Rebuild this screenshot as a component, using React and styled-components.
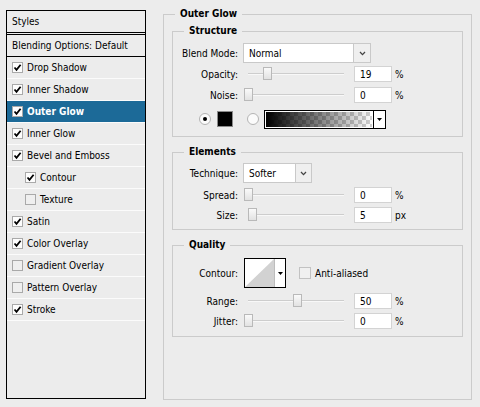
import React from "react";
import styled, { createGlobalStyle } from "styled-components";

const Global = createGlobalStyle`
  html, body { margin: 0; padding: 0; background: #ececec; }
  body {
    font-family: "DejaVu Sans Condensed", "Liberation Sans", sans-serif;
    font-size: 10px;
    color: #000;
  }
`;

const Page = styled.div`
  display: flex;
  align-items: flex-start;
  gap: 17px;
  padding: 8px 0 0 6px;
  width: 480px;
  height: 407px;
  box-sizing: border-box;
  overflow: hidden;
`;

const LeftPanel = styled.div`
  margin-top: 2px;
  width: 140px;
  height: 389px;
  border: 1px solid #000;
  box-sizing: border-box;
  display: flex;
  flex-direction: column;
`;

const HeaderRow = styled.div`
  height: 21px;
  flex: none;
  display: flex;
  align-items: center;
  padding-left: 5px;
  border-bottom: ${(p) => (p.$double ? "3px double #000" : "1px solid #000")};
`;

const EffectRow = styled.div`
  height: 21px;
  flex: none;
  display: flex;
  align-items: center;
  gap: 4px;
  padding-left: ${(p) => (p.$indent ? 18 : 5)}px;
  border-bottom: 1px solid #fbfbfb;
  background: ${(p) => (p.$selected ? "#1c6a98" : "transparent")};
  color: ${(p) => (p.$selected ? "#fff" : "#000")};
  font-weight: ${(p) => (p.$selected ? "bold" : "normal")};
`;

const Box = styled.span`
  width: 11px;
  height: 11px;
  box-sizing: border-box;
  flex: none;
  border: 1px solid #a9a9a9;
  background: ${(p) => (p.$checked ? "#fdfdfd" : "#efefef")};
  display: flex;
  align-items: center;
  justify-content: center;
`;

const Check = ({ checked }) => (
  <Box $checked={checked}>
    {checked && (
      <svg width="9" height="9" viewBox="0 0 9 9">
        <path d="M1.5 4.5 L3.5 6.8 L7.6 1.8" fill="none" stroke="#000" strokeWidth="1.8" />
      </svg>
    )}
  </Box>
);

const OuterSet = styled.fieldset`
  margin: 0;
  min-width: 0;
  width: 309px;
  height: 392px;
  box-sizing: border-box;
  border: 1px solid #cbcbcb;
  padding: 5px 8px 0;
`;

const Legend = styled.legend`
  padding: 0 5px;
  margin-left: ${(p) => p.$ml}px;
  font-weight: bold;
  line-height: 12px;
  height: 12px;
`;

const Group = styled.fieldset`
  margin: ${(p) => p.$mt}px 0 0;
  min-width: 0;
  border: 1px solid #cbcbcb;
  padding: 0 0 ${(p) => p.$pb}px;
`;

const Body = styled.div`
  display: flex;
  flex-direction: column;
`;

const Row = styled.div`
  display: flex;
  align-items: center;
  height: ${(p) => p.$h}px;
  margin-top: ${(p) => p.$mt}px;
`;

const Label = styled.span`
  width: 65px;
  flex: none;
  text-align: right;
`;

const Select = styled.div`
  display: flex;
  width: ${(p) => p.$w}px;
  height: 20px;
  margin-left: 5px;
  box-sizing: border-box;
  border: 1px solid #c9c9c9;
  background: #fff;
`;

const SelectText = styled.span`
  flex: 1;
  display: flex;
  align-items: center;
  padding-left: 5px;
`;

const SelectButton = styled.span`
  width: ${(p) => p.$w}px;
  flex: none;
  border-left: 1px solid #c9c9c9;
  background: #efefef;
  display: flex;
  align-items: center;
  justify-content: center;
`;

const Chevron = () => (
  <svg width="7" height="5" viewBox="0 0 7 5">
    <path d="M1 1 L3.5 3.6 L6 1" fill="none" stroke="#444" strokeWidth="1.3" />
  </svg>
);

const SliderBox = styled.div`
  position: relative;
  width: 100px;
  height: 16px;
  margin-left: 6px;
  flex: none;
`;

const Track = styled.div`
  position: absolute;
  left: 4px;
  right: 0;
  top: 7px;
  height: 1px;
  background: #cdcdcd;
  border-bottom: 1px solid #f8f8f8;
`;

const Thumb = styled.div`
  position: absolute;
  top: 1px;
  width: 9px;
  height: 13px;
  box-sizing: border-box;
  border: 1px solid #b9b9b9;
  background: linear-gradient(#fafafa, #e2e2e2);
`;

const NumField = styled.input`
  width: 38px;
  height: 16px;
  margin: 0 0 0 10px;
  box-sizing: border-box;
  border: 1px solid #d3d3d3;
  background: #fff;
  padding: 1px 0 0 5px;
  font: inherit;
  color: #000;
  outline: none;
`;

const Unit = styled.span`
  margin-left: 3px;
`;

const SliderRow = ({ label, value, pos, unit, mt }) => (
  <Row $h={16} $mt={mt}>
    <Label>{label}</Label>
    <SliderBox>
      <Track />
      <Thumb style={{ left: pos }} />
    </SliderBox>
    <NumField readOnly defaultValue={value} />
    <Unit>{unit}</Unit>
  </Row>
);

const ColorRow = styled.div`
  display: flex;
  align-items: center;
  height: 20px;
  margin-top: 6px;
  padding-left: 26px;
`;

const Radio = styled.span`
  width: 12px;
  height: 12px;
  box-sizing: border-box;
  border-radius: 50%;
  border: 1px solid #b4b4b4;
  background: #fbfbfb;
  flex: none;
  display: flex;
  align-items: center;
  justify-content: center;
  margin-right: ${(p) => p.$mr}px;
  &::after {
    content: "";
    width: 4px;
    height: 4px;
    border-radius: 50%;
    background: #000;
    display: ${(p) => (p.$on ? "block" : "none")};
  }
`;

const Swatch = styled.span`
  width: 16px;
  height: 16px;
  box-sizing: border-box;
  border: 1px solid #8a8a8a;
  background: #000;
  flex: none;
  margin-right: 14px;
`;

const GradientBox = styled.div`
  display: flex;
  width: 122px;
  height: 19px;
  box-sizing: border-box;
  border: 1px solid #000;
  background: #fff;
`;

const GradientFill = styled.div`
  flex: 1;
  border: 1px solid #fff;
  background:
    linear-gradient(to right, #000, rgba(0, 0, 0, 0)),
    repeating-conic-gradient(#cfcfcf 0 25%, #fff 0 50%) 0 0 / 8px 8px;
`;

const GradientArrow = styled.div`
  width: 11px;
  flex: none;
  border-left: 1px solid #000;
  display: flex;
  align-items: center;
  justify-content: center;
`;

const TriangleDown = () => (
  <svg width="5" height="3" viewBox="0 0 5 3">
    <path d="M0 0 H5 L2.5 3 Z" fill="#000" />
  </svg>
);

const ContourBox = styled.div`
  display: flex;
  width: 42px;
  height: 30px;
  margin-left: 6px;
  box-sizing: border-box;
  border: 1px solid #000;
  background: #fff;
`;

const ContourCurve = styled.div`
  width: 29px;
  flex: none;
  border-right: 1px solid #bdbdbd;
  display: flex;
`;

const ContourArrow = styled.div`
  flex: 1;
  display: flex;
  align-items: center;
  justify-content: center;
`;

const AACheck = styled.span`
  margin-left: 13px;
  width: 12px;
  height: 12px;
  box-sizing: border-box;
  border: 1px solid #c2c2c2;
  background: #f0f0f0;
  flex: none;
`;

const AALabel = styled.span`
  margin-left: 4px;
`;

const effects = [
  { name: "Drop Shadow", checked: true },
  { name: "Inner Shadow", checked: true },
  { name: "Outer Glow", checked: true, selected: true },
  { name: "Inner Glow", checked: true },
  { name: "Bevel and Emboss", checked: true },
  { name: "Contour", checked: true, indent: true },
  { name: "Texture", checked: false, indent: true },
  { name: "Satin", checked: true },
  { name: "Color Overlay", checked: true },
  { name: "Gradient Overlay", checked: false },
  { name: "Pattern Overlay", checked: false },
  { name: "Stroke", checked: true },
];

export default function App() {
  return (
    <>
      <Global />
      <Page>
        <LeftPanel>
          <HeaderRow $double>Styles</HeaderRow>
          <HeaderRow>Blending Options: Default</HeaderRow>
          {effects.map((e) => (
            <EffectRow key={e.name} $indent={e.indent} $selected={e.selected}>
              <Check checked={e.checked} />
              <span>{e.name}</span>
            </EffectRow>
          ))}
        </LeftPanel>

        <OuterSet>
          <Legend $ml={3}>Outer Glow</Legend>

          <Group $mt={0} $pb={7}>
            <Legend $ml={11}>Structure</Legend>
            <Body>
              <Row $h={20} $mt={6}>
                <Label>Blend Mode:</Label>
                <Select $w={128}>
                  <SelectText>Normal</SelectText>
                  <SelectButton $w={16}>
                    <Chevron />
                  </SelectButton>
                </Select>
              </Row>
              <SliderRow label="Opacity:" value="19" pos={19} unit="%" mt={3} />
              <SliderRow label="Noise:" value="0" pos={0} unit="%" mt={5} />
              <ColorRow>
                <Radio $on $mr={6} />
                <Swatch />
                <Radio $mr={5} />
                <GradientBox>
                  <GradientFill />
                  <GradientArrow>
                    <TriangleDown />
                  </GradientArrow>
                </GradientBox>
              </ColorRow>
            </Body>
          </Group>

          <Group $mt={9} $pb={6}>
            <Legend $ml={11}>Elements</Legend>
            <Body>
              <Row $h={20} $mt={5}>
                <Label>Technique:</Label>
                <Select $w={69}>
                  <SelectText>Softer</SelectText>
                  <SelectButton $w={15}>
                    <Chevron />
                  </SelectButton>
                </Select>
              </Row>
              <SliderRow label="Spread:" value="0" pos={0} unit="%" mt={4} />
              <SliderRow label="Size:" value="5" pos={4} unit="px" mt={4} />
            </Body>
          </Group>

          <Group $mt={9} $pb={7}>
            <Legend $ml={11}>Quality</Legend>
            <Body>
              <Row $h={30} $mt={7}>
                <Label>Contour:</Label>
                <ContourBox>
                  <ContourCurve>
                    <svg width="29" height="28" viewBox="0 0 29 28">
                      <path d="M0 28 L29 0 L29 28 Z" fill="#d2d2d2" />
                    </svg>
                  </ContourCurve>
                  <ContourArrow>
                    <TriangleDown />
                  </ContourArrow>
                </ContourBox>
                <AACheck />
                <AALabel>Anti-aliased</AALabel>
              </Row>
              <SliderRow label="Range:" value="50" pos={49} unit="%" mt={5} />
              <SliderRow label="Jitter:" value="0" pos={0} unit="%" mt={4} />
            </Body>
          </Group>
        </OuterSet>
      </Page>
    </>
  );
}
